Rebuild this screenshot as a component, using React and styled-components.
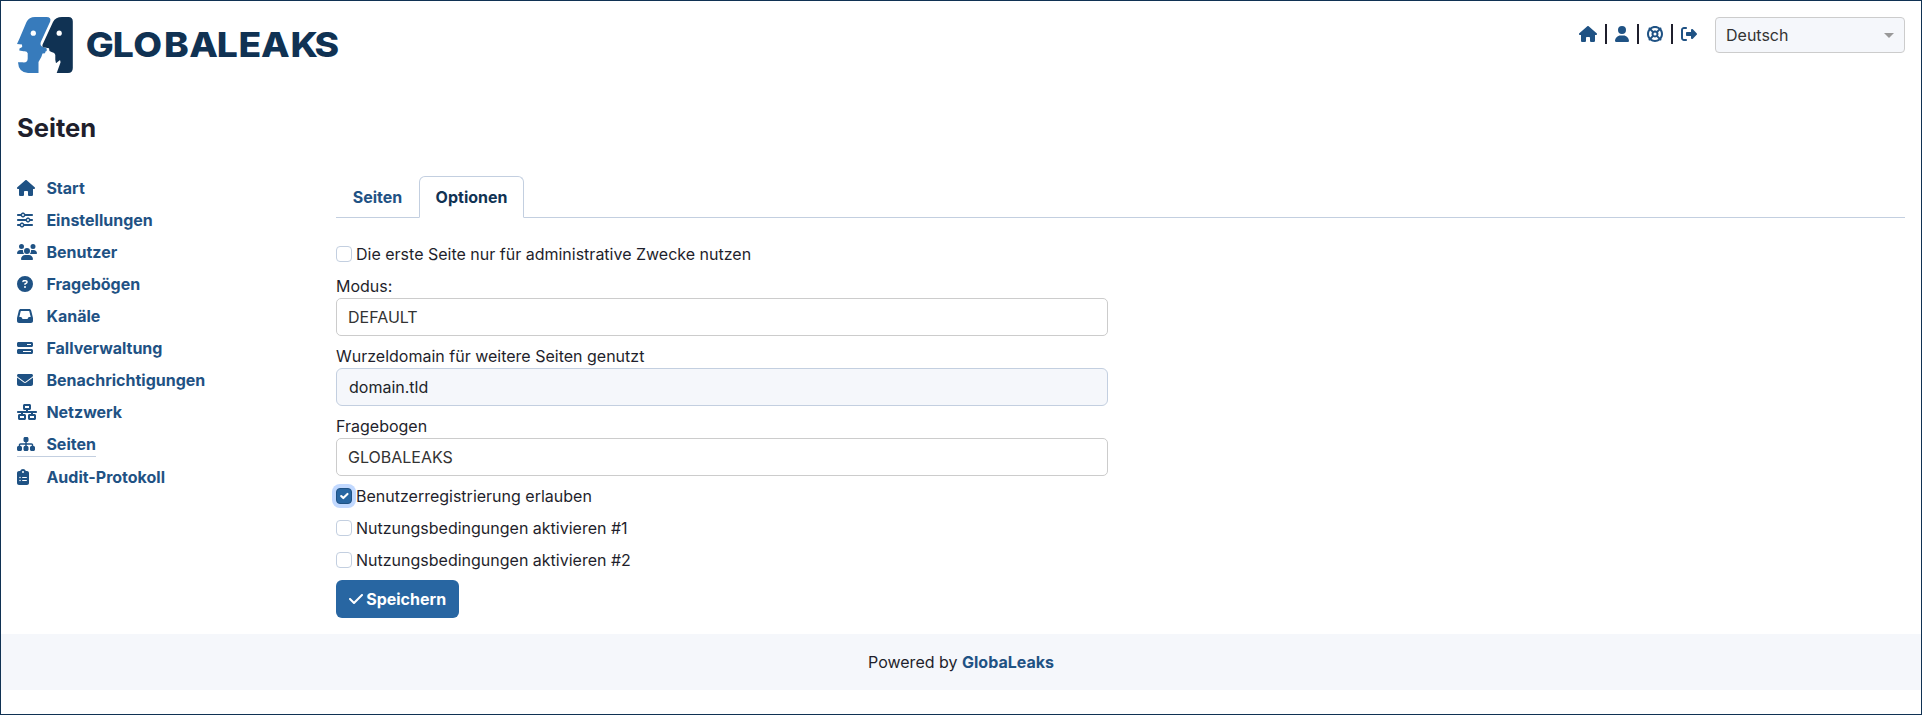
import React from 'react';
import styled, { createGlobalStyle } from 'styled-components';
import {
  FaHouse, FaUser, FaLifeRing, FaRightFromBracket, FaSliders, FaUsers,
  FaCircleQuestion, FaInbox, FaBarsProgress, FaEnvelope, FaNetworkWired,
  FaSitemap, FaClipboardList, FaCheck,
} from 'react-icons/fa6';

const color = {
  navy: '#103253',
  link: '#1f5284',
  primary: '#2866a2',
  text: '#212529',
  ink: '#1f1f2c',
  line: '#c3cfe0',
  soft: '#f5f7fb',
};

const GlobalStyle = createGlobalStyle`
  *, *::before, *::after { box-sizing: border-box; }
  body {
    margin: 0;
    font-family: Inter, "Liberation Sans", sans-serif;
    font-size: 16px;
    line-height: 24px;
    color: ${color.ink};
    background: #fff;
  }
`;

const Page = styled.div`
  min-height: 100vh;
  border: 1px solid ${color.navy};
`;

const Header = styled.header`
  display: flex;
  justify-content: space-between;
  align-items: flex-start;
  height: 95px;
  padding: 16px 16px 0;
`;

const Logo = styled.svg`
  display: block;
  width: 330px;
  height: 58px;
`;

const HeaderTools = styled.div`
  display: flex;
  align-items: flex-start;
`;

const QuickLinks = styled.div`
  display: flex;
  align-items: center;
  height: 34px;
  margin-right: 18px;
  color: ${color.link};
`;

const Glyph = styled.span`
  display: block;
  width: ${(p) => p.$width}px;
  height: 16px;
  svg { display: block; width: 100%; height: 100%; }
`;

const Divider = styled.span`
  width: 2px;
  height: 20px;
  margin: 0 8.5px 0 7.5px;
  background: ${color.ink};
`;

const LanguageSelect = styled.div`
  display: flex;
  align-items: center;
  justify-content: space-between;
  width: 190px;
  height: 36px;
  padding: 0 10px;
  border: 1px solid #ccc;
  border-radius: 4px;
  background: ${color.soft};
  color: #333;
`;

const Caret = styled.span`
  margin-top: 1px;
  border: 5px solid transparent;
  border-top-color: #999;
  border-bottom-width: 0;
`;

const Title = styled.h1`
  margin: 0;
  padding: 16px 16px 0;
  height: 80px;
  font-size: 25.6px;
  line-height: 32px;
  font-weight: 700;
`;

const Main = styled.main`
  display: grid;
  grid-template-columns: 303px 1fr;
  column-gap: 16px;
  padding: 0 16px 16px;
`;

const Nav = styled.nav`
  display: flex;
  flex-direction: column;
  align-items: flex-start;
  gap: 8px;
`;

const NavItem = styled.a`
  display: flex;
  align-items: center;
  color: ${color.link};
  font-weight: 700;
  border-bottom: ${(p) => (p.$active ? `1px solid ${color.line}` : '0')};
`;

const NavIcon = styled.span`
  width: 29.4px;
`;

const Tabs = styled.div`
  display: flex;
  border-bottom: 1px solid ${color.line};
`;

const Tab = styled.a`
  margin-bottom: -1px;
  padding: 8px 15.7px;
  border: 1px solid ${(p) => (p.$active ? color.line : 'transparent')};
  border-bottom-color: ${(p) => (p.$active ? '#fff' : 'transparent')};
  border-radius: 6px 6px 0 0;
  color: ${(p) => (p.$active ? color.navy : color.link)};
  font-weight: 700;
`;

const Form = styled.div`
  display: flex;
  flex-direction: column;
  align-items: flex-start;
  gap: 8px;
  width: 772px;
  padding-top: 24px;
`;

const CheckRow = styled.label`
  display: flex;
  align-items: center;
  gap: 4px;
`;

const Box = styled.span`
  display: grid;
  place-items: center;
  width: 16px;
  height: 16px;
  border: 1px solid ${(p) => (p.$checked ? color.link : color.line)};
  border-radius: 4px;
  background: ${(p) => (p.$checked ? color.primary : '#fff')};
  box-shadow: ${(p) => (p.$checked ? '0 0 0 4px #c2d9ff' : 'none')};
`;

const Field = styled.div`
  width: 100%;
`;

const FieldValue = styled.div`
  height: 38px;
  padding: 6px ${(p) => (p.$disabled ? 12 : 11)}px;
  border: 1px solid ${(p) => (p.$disabled ? color.line : '#ccc')};
  border-radius: ${(p) => (p.$disabled ? 6 : 5)}px;
  background: ${(p) => (p.$disabled ? color.soft : '#fff')};
  color: ${(p) => (p.$disabled ? color.text : '#333')};
`;

const SaveButton = styled.button`
  display: flex;
  align-items: center;
  gap: 3.5px;
  height: 38px;
  padding: 0 12.7px;
  border: 0;
  border-radius: 6px;
  background: ${color.primary};
  color: #fff;
  font: 700 16px/24px Inter, "Liberation Sans", sans-serif;
`;

const Footer = styled.footer`
  height: 56px;
  padding: 16px;
  text-align: center;
  background: ${color.soft};
  a { color: ${color.link}; font-weight: 700; }
`;

const navItems = [
  ['Start', FaHouse, 18],
  ['Einstellungen', FaSliders, 16],
  ['Benutzer', FaUsers, 20],
  ['Fragebögen', FaCircleQuestion, 16],
  ['Kanäle', FaInbox, 16],
  ['Fallverwaltung', FaBarsProgress, 16],
  ['Benachrichtigungen', FaEnvelope, 16],
  ['Netzwerk', FaNetworkWired, 20],
  ['Seiten', FaSitemap, 18],
  ['Audit-Protokoll', FaClipboardList, 12],
];

function Check({ label, checked }) {
  return (
    <CheckRow>
      <Box $checked={checked}>
        {checked && (
          <svg width="14" height="14" viewBox="0 0 20 20">
            <path fill="none" stroke="#fff" strokeLinecap="round" strokeLinejoin="round" strokeWidth="3" d="m6 10 3 3 6-6" />
          </svg>
        )}
      </Box>
      {label}
    </CheckRow>
  );
}

function TextField({ label, value, disabled }) {
  return (
    <Field>
      {label}
      <FieldValue $disabled={disabled}>{value}</FieldValue>
    </Field>
  );
}

function BrandLogo() {
  return (
    <Logo viewBox="0 0 330 58">
      <path fill="#377bbc" d="M18 0H29.5Q34.5 0 33.2 4.5L23.8 25Q22.8 28 25 29.5L29.7 31.5V34L28.5 34.5L28 36.3L25.5 36.5L24.3 40L21.5 45V56H11Q1.5 55.5 1 45.3H5.5Q10.7 46 10.7 41.5V36.3Q10 33.7 6.5 34.3L2.3 33.5L2.5 31.5L5.2 30L5 27.5L0 27L2.3 22L9.5 5Q12 0 18 0Z" />
      <path fill={color.navy} d="M45 0H51.5Q55.8 0 55.8 4.5V51Q55.8 56 51 56H39.7L43.5 45.5Q43.5 42 41.8 44L39 46.3L38.3 43V38Q37.8 35.5 34.5 35L32.5 34L32 31.3L26.3 30.3Q24.8 29.5 25.5 27.8L36 5Q38.5 0 45 0Z" />
      <circle cx="16.3" cy="16.2" r="2.6" fill="#fff" />
      <circle cx="42.2" cy="16.2" r="2.6" fill="#fff" />
      <text transform="scale(1.08 1)" x="63.6 88.7 107.7 136.1 159.5 184.9 205 226 253.3 275.4" y="40.2" fill={color.navy} fontFamily="Inter, sans-serif" fontWeight="800" fontSize="34.5">GLOBALEAKS</text>
    </Logo>
  );
}

export default function App() {
  return (
    <Page>
      <GlobalStyle />
      <Header>
        <BrandLogo />
        <HeaderTools>
          <QuickLinks>
            <Glyph $width={18}><FaHouse /></Glyph>
            <Divider />
            <Glyph $width={14}><FaUser /></Glyph>
            <Divider />
            <Glyph $width={16}><FaLifeRing /></Glyph>
            <Divider />
            <Glyph $width={16}><FaRightFromBracket /></Glyph>
          </QuickLinks>
          <LanguageSelect>Deutsch<Caret /></LanguageSelect>
        </HeaderTools>
      </Header>
      <Title>Seiten</Title>
      <Main>
        <Nav>
          {navItems.map(([label, Icon, width]) => (
            <NavItem key={label} $active={label === 'Seiten'}>
              <NavIcon><Glyph $width={width}><Icon /></Glyph></NavIcon>{label}
            </NavItem>
          ))}
        </Nav>
        <section>
          <Tabs>
            <Tab>Seiten</Tab>
            <Tab $active>Optionen</Tab>
          </Tabs>
          <Form>
            <Check label="Die erste Seite nur für administrative Zwecke nutzen" />
            <TextField label="Modus:" value="DEFAULT" />
            <TextField label="Wurzeldomain für weitere Seiten genutzt" value="domain.tld" disabled />
            <TextField label="Fragebogen" value="GLOBALEAKS" />
            <Check label="Benutzerregistrierung erlauben" checked />
            <Check label="Nutzungsbedingungen aktivieren #1" />
            <Check label="Nutzungsbedingungen aktivieren #2" />
            <SaveButton><Glyph $width={14}><FaCheck /></Glyph>Speichern</SaveButton>
          </Form>
        </section>
      </Main>
      <Footer>Powered by <a>GlobaLeaks</a></Footer>
    </Page>
  );
}
